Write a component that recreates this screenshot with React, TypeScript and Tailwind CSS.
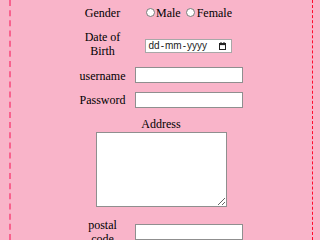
import React from "react";

function CalendarIcon() {
  return (
    <svg width="7" height="8" viewBox="0 0 7 8" className="block">
      <rect x="0.5" y="1.5" width="6" height="6" fill="none" stroke="#222" strokeWidth="1" />
      <rect x="0.5" y="1.5" width="6" height="1.6" fill="#222" />
      <rect x="1.5" y="0" width="1" height="2" fill="#222" />
      <rect x="4.5" y="0" width="1" height="2" fill="#222" />
    </svg>
  );
}

export default function App() {
  const serif = "font-['Liberation_Serif',serif] text-[12px] leading-[14px] text-black";

  return (
    <div className="h-screen overflow-hidden bg-[#f9b4c9] pl-[9px]">
      <div className={`h-[240px] w-[304px] border-l-2 border-r border-dashed border-l-[#f8628e] border-r-[#ff0a2e] ${serif}`}>
        <div className="flex flex-col items-center pr-[1px]">
          {/* gender */}
          <div className="grid h-[25px] grid-cols-[47px_108px] items-center gap-x-[9px]">
            <div className="text-center">Gender</div>
            <div className="flex items-center justify-center">
              <input type="radio" name="gender" id="male" className="m-0 h-[9px] w-[9px]" />
              <label htmlFor="male" className="ml-[1px]">Male</label>
              <input type="radio" name="gender" id="female" className="m-0 ml-[5px] h-[9px] w-[9px]" />
              <label htmlFor="female" className="ml-[2px]">Female</label>
            </div>
          </div>

          {/* dob */}
          <div className="grid h-[40px] grid-cols-[47px_108px] items-center gap-x-[9px]">
            <div className="pb-[2px] text-center">Date of Birth</div>
            <div className="flex justify-center pt-[2px]">
              <div className="ml-[-2px] flex h-[14px] w-[87px] items-center border border-[#a8a8a8] bg-white pl-[3px] pr-[5px] font-['Liberation_Sans',sans-serif] text-[10px] leading-none text-[#222]">
                <span>dd</span>
                <span className="px-[1px]">-</span>
                <span>mm</span>
                <span className="px-[1px]">-</span>
                <span>yyyy</span>
                <span className="ml-auto">
                  <CalendarIcon />
                </span>
              </div>
            </div>
          </div>

          {/* username */}
          <div className="grid h-[20px] grid-cols-[47px_108px] items-center gap-x-[9px]">
            <div className="pt-[1px] text-center">username</div>
            <input type="text" name="username" className="h-[16px] w-[108px] border border-[#8f8f8f] bg-white" />
          </div>

          {/* password */}
          <div className="grid h-[30px] grid-cols-[47px_108px] items-center gap-x-[9px]">
            <div className="text-center">Password</div>
            <input type="password" name="password" className="h-[16px] w-[108px] border border-[#8f8f8f] bg-white" />
          </div>

          {/* address */}
          <div className="mt-[2px] text-center">Address</div>
          <textarea className="mt-[1px] block h-[75px] w-[131px] border border-[#8f8f8f] bg-white"></textarea>

          {/* postal */}
          <div className="mt-[7px] grid h-[35px] grid-cols-[47px_108px] items-center gap-x-[9px]">
            <div className="text-center">postal code</div>
            <input type="text" name="postal" className="h-[16px] w-[108px] border border-[#8f8f8f] bg-white" />
          </div>
        </div>
      </div>
    </div>
  );
}
